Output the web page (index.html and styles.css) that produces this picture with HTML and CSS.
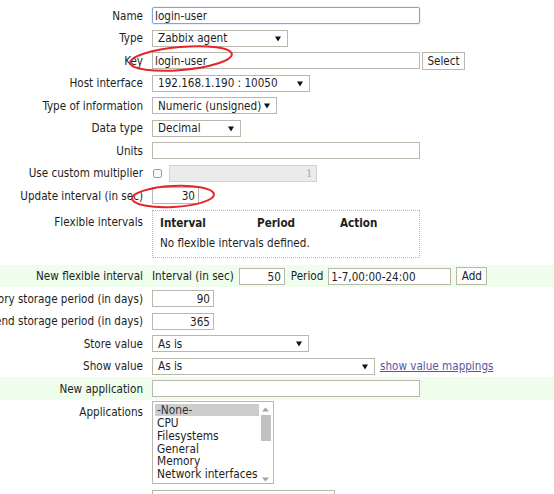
FILE: index.html
```html
<!DOCTYPE html>
<html>
<head>
<meta charset="utf-8">
<title>Item</title>
<link rel="stylesheet" href="styles.css">
</head>
<body>
<form class="form">
  <div class="row">
    <div class="label">Name</div>
    <div class="field"><input class="text focus w268" value="login-user"></div>
  </div>
  <div class="row">
    <div class="label">Type</div>
    <div class="field"><div class="select w136"><span>Zabbix agent</span><svg class="arrow" width="6" height="6" viewBox="0 0 6 6"><polygon points="0,0.5 6,0.5 3,5.5"/></svg></div></div>
  </div>
  <div class="row">
    <div class="label">Key</div>
    <div class="field gap2"><input class="text w268" value="login-user"><button type="button" class="btn w43">Select</button></div>
  </div>
  <div class="row">
    <div class="label">Host interface</div>
    <div class="field"><div class="select w158"><span>192.168.1.190 : 10050</span><svg class="arrow" width="6" height="6" viewBox="0 0 6 6"><polygon points="0,0.5 6,0.5 3,5.5"/></svg></div></div>
  </div>
  <div class="row">
    <div class="label">Type of information</div>
    <div class="field"><div class="select w125"><span>Numeric (unsigned)</span><svg class="arrow" width="6" height="6" viewBox="0 0 6 6"><polygon points="0,0.5 6,0.5 3,5.5"/></svg></div></div>
  </div>
  <div class="row">
    <div class="label">Data type</div>
    <div class="field"><div class="select w89"><span>Decimal</span><svg class="arrow" width="6" height="6" viewBox="0 0 6 6"><polygon points="0,0.5 6,0.5 3,5.5"/></svg></div></div>
  </div>
  <div class="row">
    <div class="label">Units</div>
    <div class="field"><input class="text w268" value=""></div>
  </div>
  <div class="row">
    <div class="label">Use custom multiplier</div>
    <div class="field gap7"><span class="check"></span><input class="text disabled w148" value="1" disabled></div>
  </div>
  <div class="row">
    <div class="label">Update interval (in sec)</div>
    <div class="field"><input class="text num w47" value="30"></div>
  </div>
  <div class="row row-flex">
    <div class="label top8">Flexible intervals</div>
    <div class="field top3">
      <div class="flexbox">
        <div class="flexhead"><span>Interval</span><span>Period</span><span>Action</span></div>
        <div class="flexempty">No flexible intervals defined.</div>
      </div>
    </div>
  </div>
  <div class="row band">
    <div class="label">New flexible interval</div>
    <div class="field newflex">
      <span>Interval (in sec)</span>
      <input class="text num w46" value="50">
      <span class="ml1">Period</span>
      <input class="text w123" value="1-7,00:00-24:00">
      <button type="button" class="btn w31">Add</button>
    </div>
  </div>
  <div class="row">
    <div class="label">History storage period (in days)</div>
    <div class="field"><input class="text num w62" value="90"></div>
  </div>
  <div class="row">
    <div class="label">Trend storage period (in days)</div>
    <div class="field"><input class="text num w62" value="365"></div>
  </div>
  <div class="row">
    <div class="label">Store value</div>
    <div class="field"><div class="select w157"><span>As is</span><svg class="arrow" width="6" height="6" viewBox="0 0 6 6"><polygon points="0,0.5 6,0.5 3,5.5"/></svg></div></div>
  </div>
  <div class="row">
    <div class="label">Show value</div>
    <div class="field gap5"><div class="select w223"><span>As is</span><svg class="arrow" width="6" height="6" viewBox="0 0 6 6"><polygon points="0,0.5 6,0.5 3,5.5"/></svg></div><a class="link" href="#">show value mappings</a></div>
  </div>
  <div class="row band">
    <div class="label">New application</div>
    <div class="field"><input class="text w268" value=""></div>
  </div>
  <div class="row row-apps">
    <div class="label top5">Applications</div>
    <div class="field top1">
      <div class="listbox">
        <div class="items">
          <div class="item selected">-None-</div>
          <div class="item">CPU</div>
          <div class="item">Filesystems</div>
          <div class="item">General</div>
          <div class="item">Memory</div>
          <div class="item">Network interfaces</div>
        </div>
        <div class="scrollbar">
          <svg class="sarrow" width="7" height="5" viewBox="0 0 7 5"><polygon points="0,4.5 7,4.5 3.5,0.5"/></svg>
          <div class="thumb"></div>
          <div class="spacer"></div>
          <svg class="sarrow" width="7" height="5" viewBox="0 0 7 5"><polygon points="0,0.5 7,0.5 3.5,4.5"/></svg>
        </div>
      </div>
    </div>
  </div>
  <div class="row">
    <div class="label"></div>
    <div class="field"><input class="text w183" value=""></div>
  </div>
</form>
<svg class="marks" width="554" height="494" viewBox="0 0 554 494">
  <ellipse cx="181" cy="58.5" rx="51" ry="11.5" transform="rotate(-5 181 58.5)"/>
  <ellipse cx="173" cy="196.5" rx="41" ry="10.5" transform="rotate(-3 173 196.5)"/>
</svg>
</body>
</html>
```
FILE: styles.css
```css
html, body {
  margin: 0;
  padding: 0;
  background: #ffffff;
}
body {
  font-family: "DejaVu Sans Condensed", "DejaVu Sans", sans-serif;
  font-stretch: condensed;
  font-size: 11.6px;
  line-height: 13px;
  color: #1e1e1e;
  width: 554px;
  height: 494px;
  overflow: hidden;
  position: relative;
}
.form {
  padding-top: 4.25px;
}
.row {
  display: grid;
  grid-template-columns: 143px 1fr;
  column-gap: 9px;
  height: 22.5px;
  align-items: center;
}
.row-flex {
  height: 58px;
  align-items: start;
}
.row-apps {
  height: 87px;
  align-items: start;
}
.band {
  background: #eefdec;
}
.label {
  display: flex;
  justify-content: flex-end;
  white-space: nowrap;
  padding-top: 1px;
}
.top8 { padding-top: 9px; }
.top5 { padding-top: 6.5px; }
.top3 { padding-top: 3.25px; }
.top1 { padding-top: 0.75px; }
.field {
  display: flex;
  align-items: center;
  white-space: nowrap;
}
.gap2 { gap: 2px; }
.gap5 { gap: 5px; }
.gap7 { gap: 7px; }

.text {
  box-sizing: border-box;
  height: 17px;
  margin: 0;
  padding: 1px 2px 0;
  border: 1px solid #bab7ad;
  background: #ffffff;
  font: inherit;
  color: #1e1e1e;
  outline: none;
}
.text.focus {
  border-color: #7fa6d8;
  border-radius: 2px;
  box-shadow: 0 0 2px #b4cdee;
}
.text.num {
  text-align: right;
  padding-right: 3px;
}
.text.disabled {
  background: #ebebeb;
  border-color: #d2d2d2;
  text-align: right;
  padding-right: 4px;
  color: #a8a8a8;
  font-family: "Liberation Serif", serif;
  font-size: 12px;
}
.w268 { width: 268px; }
.w183 { width: 183px; }
.w148 { width: 148px; }
.w123 { width: 123px; }
.w62 { width: 62px; }
.w47 { width: 47px; }
.w46 { width: 46px; }
.w43 { width: 43px; }
.w31 { width: 31px; }
.w136 { width: 136px; }
.w158 { width: 158px; }
.w125 { width: 125px; }
.w89 { width: 89px; }
.w157 { width: 157px; }
.w223 { width: 223px; }

.select {
  box-sizing: border-box;
  height: 17px;
  display: flex;
  align-items: center;
  justify-content: space-between;
  padding: 1px 6px 0 5px;
  border: 1px solid #bab7ad;
  background: #ffffff;
  overflow: hidden;
}
.arrow {
  flex: none;
  fill: #111111;
}
.btn {
  box-sizing: border-box;
  height: 18px;
  margin: 0;
  padding: 1px 0 0;
  border: 1px solid #bab7ad;
  background: #fdfdfd;
  font: inherit;
  color: #1e1e1e;
  text-align: center;
}
.check {
  box-sizing: border-box;
  width: 9px;
  height: 9px;
  margin-left: 1px;
  border: 1px solid #9e9e9e;
  border-radius: 2px;
  background: #f7f7f7;
}
.flexbox {
  box-sizing: border-box;
  width: 268px;
  height: 48px;
  border: 1px dotted #a6b7da;
  padding: 6px 7px 0;
}
.flexhead {
  display: grid;
  grid-template-columns: 97px 83px auto;
  font-weight: bold;
  margin-bottom: 7px;
}
.newflex {
  gap: 5px;
}
.ml1 { margin-left: 1px; }
.link {
  color: #5656a4;
  text-decoration: underline;
}
.listbox {
  box-sizing: border-box;
  width: 122px;
  height: 83px;
  border: 1px solid #bab7ad;
  background: #ffffff;
  display: flex;
  padding: 2.7px 1px 1px 2px;
  overflow: hidden;
}
.items {
  flex: 1;
  font-size: 11.8px;
  color: #1e1e1e;
  padding-top: 0;
}
.item {
  height: 12.8px;
  line-height: 13.4px;
  padding-left: 2px;
  white-space: nowrap;
}
.item.selected {
  background: #cdcdcd;
  color: #333333;
  height: 11.8px;
  line-height: 12.6px;
  margin-bottom: 1px;
}
.scrollbar {
  width: 13px;
  display: flex;
  flex-direction: column;
  align-items: center;
  padding-top: 3px;
}
.sarrow {
  fill: #a3a3a3;
  flex: none;
}
.thumb {
  width: 10px;
  height: 26px;
  margin-top: 3px;
  background: #c1c1c1;
}
.spacer {
  flex: 1;
}
.marks {
  position: absolute;
  left: 0;
  top: 0;
  pointer-events: none;
  fill: none;
  stroke: #e3262c;
  stroke-width: 2;
}
```
